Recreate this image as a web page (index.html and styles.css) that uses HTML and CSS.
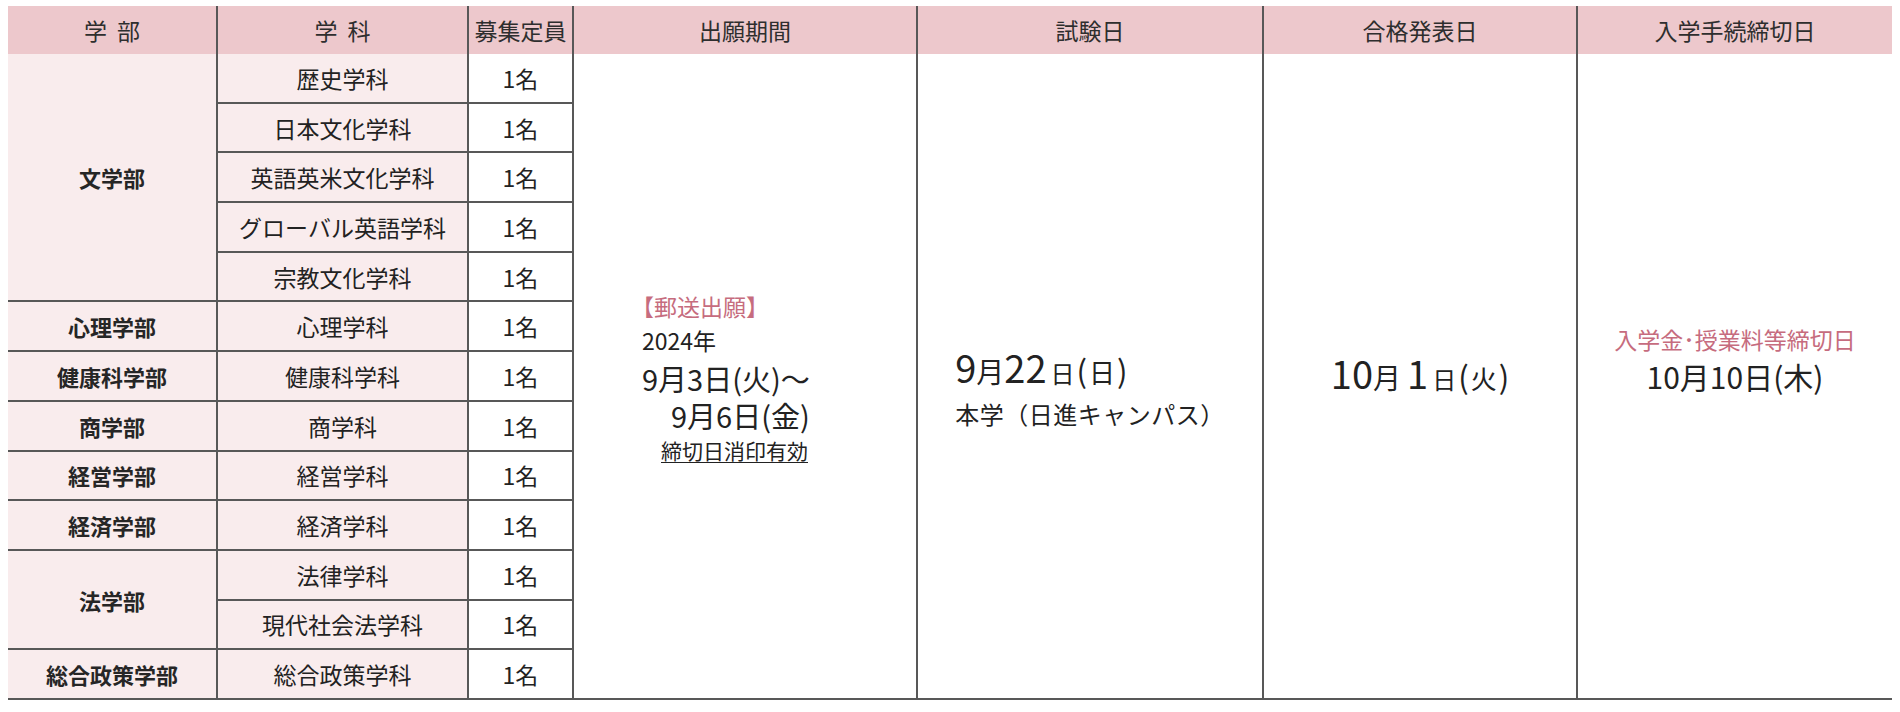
FILE: index.html
```html
<!DOCTYPE html>
<html lang="ja">
<head>
<meta charset="utf-8">
<title>入試日程</title>
<link rel="stylesheet" href="styles.css">
</head>
<body>
<div class="schedule">
  <div class="th"><span class="spread">学部</span></div>
  <div class="th"><span class="spread">学科</span></div>
  <div class="th">募集定員</div>
  <div class="th">出願期間</div>
  <div class="th">試験日</div>
  <div class="th">合格発表日</div>
  <div class="th th-last">入学手続締切日</div>

  <div class="fac span5">文学部</div>
  <div class="dept">歴史学科</div>
  <div class="num">1名</div>
  <div class="info period span13">
    <div class="period-body">
      <p class="label">【郵送出願】</p>
      <p class="year">2024年</p>
      <p class="date-l">9月3日(火)～</p>
      <p class="date-l date-l2">　9月6日(金)</p>
      <p class="note">締切日消印有効</p>
    </div>
  </div>
  <div class="info exam span13">
    <div class="exam-body">
      <p class="big"><span class="dg">9</span><span class="mo">月</span><span class="dg">22</span><span class="dy">日</span><span class="pr">(</span><span class="wd">日</span><span class="pr">)</span></p>
      <p class="place">本学（日進キャンパス）</p>
    </div>
  </div>
  <div class="info result span13">
    <p class="big"><span class="dg">10</span><span class="mo">月</span><span class="dg dg1">1</span><span class="dy">日</span><span class="pr">(</span><span class="wd">火</span><span class="pr">)</span></p>
  </div>
  <div class="info deadline span13">
    <div class="deadline-body">
      <p class="label-r">入学金･授業料等締切日</p>
      <p class="date-r">10月10日(木)</p>
    </div>
  </div>

  <div class="dept">日本文化学科</div>
  <div class="num">1名</div>
  <div class="dept">英語英米文化学科</div>
  <div class="num">1名</div>
  <div class="dept">グローバル英語学科</div>
  <div class="num">1名</div>
  <div class="dept">宗教文化学科</div>
  <div class="num">1名</div>

  <div class="fac">心理学部</div>
  <div class="dept">心理学科</div>
  <div class="num">1名</div>

  <div class="fac">健康科学部</div>
  <div class="dept">健康科学科</div>
  <div class="num">1名</div>

  <div class="fac">商学部</div>
  <div class="dept">商学科</div>
  <div class="num">1名</div>

  <div class="fac">経営学部</div>
  <div class="dept">経営学科</div>
  <div class="num">1名</div>

  <div class="fac">経済学部</div>
  <div class="dept">経済学科</div>
  <div class="num">1名</div>

  <div class="fac span2">法学部</div>
  <div class="dept">法律学科</div>
  <div class="num">1名</div>
  <div class="dept">現代社会法学科</div>
  <div class="num">1名</div>

  <div class="fac">総合政策学部</div>
  <div class="dept">総合政策学科</div>
  <div class="num">1名</div>
</div>
</body>
</html>
```

FILE: styles.css
```css
* {
  box-sizing: border-box;
}

html,
body {
  margin: 0;
  background: #ffffff;
}

body {
  padding: 6px 8px;
  font-family: "Noto Sans CJK JP", "Noto Sans", sans-serif;
  color: #222222;
}

p {
  margin: 0;
}

.schedule {
  display: grid;
  grid-template-columns: 210px 251px 105px 344px 346px 314px 314px;
  grid-template-rows: 48px repeat(13, 49.7px);
  width: 1884px;
}

.th {
  display: flex;
  align-items: center;
  justify-content: center;
  background: #edc8cc;
  border-right: 2px solid #585858;
  font-size: 23px;
  color: #2e2e2e;
  white-space: nowrap;
}

.th-last {
  border-right: 0;
}

.spread {
  letter-spacing: 10px;
  margin-right: -10px;
}

.fac,
.dept,
.num,
.info {
  display: flex;
  align-items: center;
  justify-content: center;
  border-right: 2px solid #585858;
  border-bottom: 2px solid #585858;
  font-size: 23px;
  white-space: nowrap;
}

.fac {
  background: #f9eced;
  font-size: 22px;
  font-weight: 700;
  color: #262626;
}

.dept {
  background: #f9eced;
}

.num {
  background: #ffffff;
}

.span5 {
  grid-row: span 5;
}

.span2 {
  grid-row: span 2;
}

.span13 {
  grid-row: span 13;
}

.info {
  background: #ffffff;
}

/* 出願期間 */
.period {
  justify-content: flex-start;
  padding-left: 68px;
  padding-top: 6px;
}

.period-body {
  display: flex;
  flex-direction: column;
  align-items: flex-start;
}

.label {
  font-size: 23px;
  line-height: 34px;
  color: #c66c7e;
  margin-left: -11px;
}

.year {
  font-size: 23px;
  line-height: 34px;
}

.date-l {
  font-size: 29px;
  line-height: 42px;
}

.date-l2 {
  line-height: 32px;
}

.note {
  font-size: 21px;
  line-height: 38px;
  margin-left: 19px;
  text-decoration: underline;
  text-underline-offset: 3px;
  text-decoration-thickness: 1px;
}

/* 試験日 */
.exam {
  padding-top: 26px;
}

.exam-body {
  display: flex;
  flex-direction: column;
  align-items: flex-start;
}

.big {
  line-height: 36px;
  white-space: nowrap;
}

.dg {
  font-size: 38px;
}

.dg1 {
  margin-left: 6px;
}

.mo {
  font-size: 28px;
}

.dy {
  font-size: 24px;
  margin-left: 4px;
  margin-right: 2px;
}

.pr {
  font-size: 31px;
}

.wd {
  font-size: 26px;
  margin: 0 2px;
}

.place {
  font-size: 24px;
  letter-spacing: 0.5px;
  line-height: 30px;
  margin-top: 8px;
}

/* 合格発表日 */
.result .big {
  line-height: 48px;
}

/* 入学手続締切日 */
.deadline {
  border-right: 0;
  padding-bottom: 34px;
}

.deadline-body {
  display: flex;
  flex-direction: column;
  align-items: center;
}

.label-r {
  font-size: 23px;
  line-height: 34px;
  color: #c66c7e;
}

.date-r {
  font-size: 30px;
  line-height: 40px;
}
```
